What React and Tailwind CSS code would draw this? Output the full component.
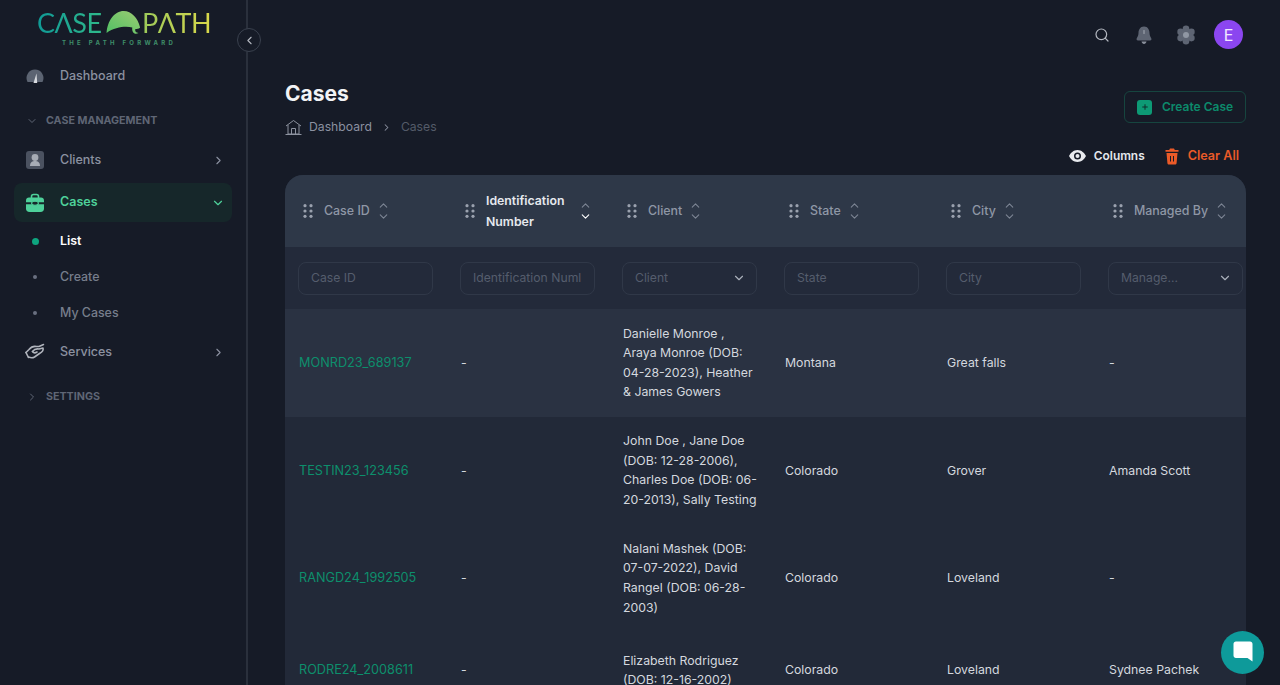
import { ChevronRight, ChevronDown, ChevronLeft, ChevronUp, Search, Plus } from 'lucide-react'

const font = { fontFamily: 'Inter, "Noto Sans", sans-serif' }

const columns = [
  { label: 'Case ID', filter: 'Case ID' },
  { label: 'Identification Number', filter: 'Identification Numl', active: true },
  { label: 'Client', filter: 'Client', select: true },
  { label: 'State', filter: 'State' },
  { label: 'City', filter: 'City' },
  { label: 'Managed By', filter: 'Manage...', select: true },
]

const rows = [
  { id: 'MONRD23_689137', client: ['Danielle Monroe ,', 'Araya Monroe (DOB:', '04-28-2023), Heather', '& James Gowers'], state: 'Montana', city: 'Great falls', by: '-', hover: true },
  { id: 'TESTIN23_123456', client: ['John Doe , Jane Doe', '(DOB: 12-28-2006),', 'Charles Doe (DOB: 06-', '20-2013), Sally Testing'], state: 'Colorado', city: 'Grover', by: 'Amanda Scott' },
  { id: 'RANGD24_1992505', client: ['Nalani Mashek (DOB:', '07-07-2022), David', 'Rangel (DOB: 06-28-', '2003)'], state: 'Colorado', city: 'Loveland', by: '-' },
  { id: 'RODRE24_2008611', client: ['Elizabeth Rodriguez', '(DOB: 12-16-2002)'], state: 'Colorado', city: 'Loveland', by: 'Sydnee Pachek' },
]

function Logo() {
  return (
    <div className="ml-[37px] w-[174px] h-[51px] pt-[8px]">
      <div className="flex items-center h-[30px]">
        <span className="text-[27px] leading-[30px] tracking-[-0.5px] font-normal bg-gradient-to-r from-[#0f9a96] to-[#2fb98a] bg-clip-text text-transparent" style={{ fontFamily: 'Lato, sans-serif' }}>CΛSE</span>
        <svg width="48" height="30" viewBox="0 0 48 30" className="ml-[3px] -mt-[3px]">
          <defs>
            <linearGradient id="dome" x1="0" y1="1" x2="1" y2="0">
              <stop offset="0" stopColor="#4fc064" />
              <stop offset="1" stopColor="#9ccb72" />
            </linearGradient>
          </defs>
          <path d="M2 29 C3 14 12 1 24 1 C34 1 42 10 45 22 C43 24 41 24 39 24 C38 27 40 29 43 29 C38 32 34 28 35 22 C27 20 13 21 2 29 Z" fill="url(#dome)" />
        </svg>
        <span className="text-[27px] leading-[30px] tracking-[-0.5px] font-normal bg-gradient-to-r from-[#9bc95a] to-[#d9d84a] bg-clip-text text-transparent" style={{ fontFamily: 'Lato, sans-serif' }}>PΛTH</span>
      </div>
      <div className="mt-[1px] pl-[25px] text-[6px] leading-[8px] font-bold tracking-[3.3px] text-[#3f8f6a] whitespace-nowrap">THE PATH FORWARD</div>
    </div>
  )
}

function GaugeIcon() {
  return (
    <svg width="20" height="20" viewBox="0 0 20 20">
      <path d="M2.5 16 A8.5 8.5 0 1 1 17.5 16 Z" fill="#5c6472" />
      <path d="M8.5 17 L11.5 7.5 L12.2 17 Z" fill="#d8dbe0" />
    </svg>
  )
}

function ClientIcon() {
  return (
    <svg width="20" height="20" viewBox="0 0 20 20">
      <rect x="1" y="1" width="18" height="18" rx="3" fill="#4b5260" />
      <circle cx="10" cy="7.5" r="3.4" fill="#a7acb5" />
      <path d="M5 16 C5 12 7.5 11 10 11 C12.5 11 15 12 15 16 Z" fill="#a7acb5" />
    </svg>
  )
}

function CaseIcon() {
  return (
    <svg width="20" height="20" viewBox="0 0 20 20">
      <path d="M6.5 5 V3.5 C6.5 2.2 7.3 1.5 8.5 1.5 H11.5 C12.7 1.5 13.5 2.2 13.5 3.5 V5" fill="none" stroke="#4ed19a" strokeWidth="1.6" />
      <path d="M1 7.5 C1 5.6 2.2 4.5 4 4.5 H16 C17.8 4.5 19 5.6 19 7.5 V9.2 H1 Z" fill="#4ed19a" />
      <path d="M1 11.2 H19 V15.5 C19 17.8 17.8 19 15.5 19 H4.5 C2.2 19 1 17.8 1 15.5 Z" fill="#4ed19a" />
      <ellipse cx="10" cy="10.2" rx="3.4" ry="2" fill="#172a2b" stroke="#4ed19a" strokeWidth="1.1" />
    </svg>
  )
}

function HandIcon() {
  return (
    <svg width="20" height="20" viewBox="0 0 20 20" fill="none" stroke="#b0b4bc" strokeWidth="1.6" strokeLinecap="round" strokeLinejoin="round">
      <path d="M1 10.5 L4 7.5 C6 5 9 4 11.5 4.5 L14 4.5 L18.5 2.5" />
      <path d="M7.5 9.5 C9 7.5 11.5 6.5 14 7 L18 6 C18.7 8.5 16.5 10.5 14.5 11.5 L9.5 15 C7.5 16.2 5.5 15.8 3.5 15" />
      <path d="M1 10.5 L3.5 15.5" />
      <path d="M7.5 9.5 C8.5 11 10.5 11 12 10" />
    </svg>
  )
}

function NavItem({ icon, label, arrow }) {
  return (
    <div className="flex items-center h-[38px] mx-[14px] px-[11px] text-[12.5px] font-medium text-[#8b91a0]">
      <span className="w-[20px] flex justify-center shrink-0">{icon}</span>
      <span className="ml-[15px] flex-1">{label}</span>
      {arrow && <ChevronRight size={13} strokeWidth={2} className="text-[#8b91a0] -mr-[4px]" />}
    </div>
  )
}

function SubItem({ label, active, className }) {
  return (
    <div className={`flex items-center h-[36px] mx-[14px] px-[11px] text-[12.4px] font-medium ${active ? 'text-white font-semibold' : 'text-[#777e8c]'} ${className || ''}`}>
      <span className="w-[20px] flex justify-center">
        <span className={active ? 'w-[7px] h-[7px] rounded-full bg-[#0ea57f]' : 'w-[4px] h-[4px] rounded-full bg-[#697080]'} />
      </span>
      <span className="ml-[15px]">{label}</span>
    </div>
  )
}

function Sidebar() {
  return (
    <aside className="w-[248px] shrink-0 h-full border-r-2 border-[#2a303c]">
      <Logo />
      <div className="mt-[6px]"><NavItem icon={<GaugeIcon />} label="Dashboard" /></div>
      <div className="flex items-center mt-[18px] h-[16px] pl-[26px] text-[10.7px] font-bold text-[#5f6675]">
        <ChevronDown size={12} strokeWidth={2} className="text-[#5f6675]" />
        <span className="ml-[8px]">CASE MANAGEMENT</span>
      </div>
      <div className="mt-[12px]"><NavItem icon={<ClientIcon />} label="Clients" arrow /></div>
      <div className="flex items-center h-[39px] mt-[4px] mx-[14px] px-[11px] rounded-lg bg-[#16272a] text-[12.5px] font-semibold text-[#4ed19a]">
        <CaseIcon />
        <span className="ml-[15px] flex-1">Cases</span>
        <ChevronDown size={14} strokeWidth={2} className="-mr-[4px]" />
      </div>
      <SubItem label="List" active className="mt-[1px]" />
      <SubItem label="Create" />
      <SubItem label="My Cases" />
      <div className="mt-[2px]"><NavItem icon={<HandIcon />} label="Services" arrow /></div>
      <div className="flex items-center mt-[18px] h-[16px] pl-[26px] text-[10.7px] font-bold text-[#5f6675]">
        <ChevronRight size={12} strokeWidth={2} className="text-[#5f6675]" />
        <span className="ml-[8px]">SETTINGS</span>
      </div>
    </aside>
  )
}

function Grip() {
  return (
    <svg width="10" height="14" viewBox="0 0 10 14" className="shrink-0" fill="#9aa1ae">
      {[1.7, 7, 12.3].map(y => (
        <g key={y}>
          <circle cx="2" cy={y} r="1.6" />
          <circle cx="8" cy={y} r="1.6" />
        </g>
      ))}
    </svg>
  )
}

function SortIcon({ active }) {
  return (
    <span className="flex flex-col items-center ml-[7px] shrink-0">
      <ChevronUp size={13} strokeWidth={2} className="text-[#7d8594] -mb-[2px]" />
      <ChevronDown size={13} strokeWidth={2} className={active ? 'text-white' : 'text-[#7d8594]'} />
    </span>
  )
}

function HeaderCell({ col }) {
  return (
    <div className="flex items-center pl-[18px] pr-[12px]">
      <Grip />
      {col.active ? (
        <span className="ml-[11px] w-[86px] text-[12.3px] leading-[21px] font-semibold text-[#e6e9ee]">{col.label}</span>
      ) : (
        <span className="ml-[11px] text-[12.4px] font-medium text-[#8f97a6] whitespace-nowrap">{col.label}</span>
      )}
      <SortIcon active={col.active} />
    </div>
  )
}

function FilterCell({ col }) {
  return (
    <div className="flex items-center pl-[13px]">
      <div className="flex items-center justify-between w-[135px] h-[33px] px-[12px] rounded-lg border border-[#303848] text-[12.2px] text-[#555d6d] overflow-hidden whitespace-nowrap">
        <span>{col.filter}</span>
        {col.select && <ChevronDown size={14} strokeWidth={2} className="text-[#aab0bb] -mr-[2px] shrink-0" />}
      </div>
    </div>
  )
}

function Row({ row }) {
  return (
    <div className={`grid grid-cols-[repeat(6,162px)] min-h-[77px] text-[12.3px] leading-[19.6px] text-[#d4d8df] ${row.hover ? 'bg-[#2a3242]' : ''}`}>
      <div className="flex items-center pl-[14px] text-[12.7px] text-[#0d8f6c]">{row.id}</div>
      <div className="flex items-center pl-[14px]">-</div>
      <div className="pl-[14px] py-[14.6px] self-center whitespace-nowrap">
        {row.client.map(line => <div key={line}>{line}</div>)}
      </div>
      <div className="flex items-center pl-[14px]">{row.state}</div>
      <div className="flex items-center pl-[14px]">{row.city}</div>
      <div className="flex items-center pl-[14px]">{row.by}</div>
    </div>
  )
}

function TopIcons() {
  return (
    <div className="flex items-center justify-end h-[69px] pr-[37px] gap-[22px]">
      <Search size={16} strokeWidth={1.8} className="text-[#b4b8c0] mr-[2px]" />
      <svg width="20" height="20" viewBox="0 0 20 20">
        <path d="M10 1.5 C6 1.5 4.5 5 4.5 8 C4.5 11 3 12.5 2.5 14 C2.5 15 3.5 15.5 5 15.5 H15 C16.5 15.5 17.5 15 17.5 14 C17 12.5 15.5 11 15.5 8 C15.5 5 14 1.5 10 1.5 Z" fill="#5e6573" />
        <path d="M7.5 16.5 H12.5 C12.2 18 11.2 19 10 19 C8.8 19 7.8 18 7.5 16.5 Z" fill="#8a909c" />
        <rect x="9.4" y="5" width="1.2" height="4" rx="0.6" fill="#9aa0ab" />
      </svg>
      <svg width="20" height="20" viewBox="0 0 20 20" fill="#5e6573">
        <circle cx="10" cy="3.8" r="3.3" />
        <circle cx="10" cy="16.2" r="3.3" />
        <circle cx="4.6" cy="6.9" r="3.3" />
        <circle cx="15.4" cy="6.9" r="3.3" />
        <circle cx="4.6" cy="13.1" r="3.3" />
        <circle cx="15.4" cy="13.1" r="3.3" />
        <circle cx="10" cy="10" r="5.5" />
        <circle cx="10" cy="10" r="3" fill="#9097a3" />
      </svg>
      <div className="w-[29px] h-[29px] rounded-full bg-[#8b46f0] flex items-center justify-center text-[16px] text-[#f1e8ff] -ml-[4px]">E</div>
    </div>
  )
}

export default function App() {
  return (
    <div className="relative flex w-full h-[685px] overflow-hidden bg-[#161b27]" style={font}>
      <Sidebar />
      <button className="absolute left-[237px] top-[28px] w-[24px] h-[24px] rounded-full border border-[#3a414e] bg-[#161b27] flex items-center justify-center text-[#b4b8c0]">
        <ChevronLeft size={13} strokeWidth={2} />
      </button>

      <main className="flex-1 min-w-0">
        <TopIcons />
        <div className="ml-[37px] w-[961px]">
          <div className="flex justify-between">
            <div>
              <h1 className="text-[21px] leading-[28px] mt-[11px] font-bold text-[#f2f3f5]">Cases</h1>
              <div className="flex items-center mt-[10px] text-[12.2px] leading-[18px]">
                <svg width="17" height="17" viewBox="0 0 17 17" fill="none" stroke="#8d93a0" strokeWidth="1" strokeLinejoin="round">
                  <path d="M1 7 L8.5 1.5 L16 7" />
                  <path d="M3 6 V15 H14 V6" />
                  <path d="M6.5 15 V9.5 H10.5 V15" />
                  <path d="M0.5 15.5 H16.5" />
                </svg>
                <span className="ml-[7px] text-[#8b91a0]">Dashboard</span>
                <ChevronRight size={11} strokeWidth={2.2} className="mx-[9px] text-[#8b91a0]" />
                <span className="text-[#545b69]">Cases</span>
              </div>
            </div>
            <div className="flex items-center w-[122px] h-[32px] mt-[22px] px-[12px] rounded-md border border-[#16453f] text-[12px] font-semibold text-[#0c8a6b] whitespace-nowrap">
              <span className="w-[15px] h-[15px] rounded-[3px] bg-[#0d9a75] flex items-center justify-center shrink-0">
                <Plus size={8} strokeWidth={3} className="text-[#0e2f2c]" />
              </span>
              <span className="ml-[10px]">Create Case</span>
            </div>
          </div>

          <div className="flex justify-end items-center h-[20px] mt-[10px] pr-[7px] text-[11.9px] font-semibold">
            <svg width="17" height="12" viewBox="0 0 17 12" fill="#e8eaee">
              <path fillRule="evenodd" d="M8.5 0 C12.5 0 15.5 3 17 6 C15.5 9 12.5 12 8.5 12 C4.5 12 1.5 9 0 6 C1.5 3 4.5 0 8.5 0 Z M8.5 2.5 A3.5 3.5 0 1 0 8.5 9.5 A3.5 3.5 0 1 0 8.5 2.5 Z" />
              <circle cx="8.5" cy="6" r="2" />
            </svg>
            <span className="ml-[8px] text-[#e4e7ec]">Columns</span>
            <svg width="14" height="17" viewBox="0 0 14 17" className="ml-[20px]" fill="#ea5a28">
              <path d="M5 0.5 H9 L9.8 2 H13.5 V3.8 H0.5 V2 H4.2 Z" />
              <path fillRule="evenodd" d="M1.5 5 H12.5 L11.6 15 C11.5 16 10.8 16.5 10 16.5 H4 C3.2 16.5 2.5 16 2.4 15 Z M5 8 V13.5 H6 V8 Z M8 8 V13.5 H9 V8 Z" />
            </svg>
            <span className="ml-[9px] text-[12.6px] text-[#ea5a28]">Clear All</span>
          </div>

          <div className="mt-[9px] rounded-t-[18px] overflow-hidden bg-[#222938]">
            <div className="grid grid-cols-[repeat(6,162px)] h-[72px] bg-[#2e3848]">
              {columns.map(col => <HeaderCell key={col.label} col={col} />)}
            </div>
            <div className="grid grid-cols-[repeat(6,162px)] h-[62px] bg-[#232a3a]">
              {columns.map(col => <FilterCell key={col.label} col={col} />)}
            </div>
            {rows.map(row => <Row key={row.id} row={row} />)}
          </div>
        </div>
      </main>

      <button className="absolute left-[1221px] top-[631px] w-[43px] h-[43px] rounded-full bg-[#0e9a9a] flex items-center justify-center">
        <svg width="20" height="21" viewBox="0 0 20 21" fill="#ffffff" className="-mt-[2px]">
          <path d="M3 0.5 H17 C18.5 0.5 19.5 1.5 19.5 3 V20.5 L14.5 17 H3 C1.5 17 0.5 16 0.5 14.5 V3 C0.5 1.5 1.5 0.5 3 0.5 Z" />
        </svg>
      </button>
    </div>
  )
}
